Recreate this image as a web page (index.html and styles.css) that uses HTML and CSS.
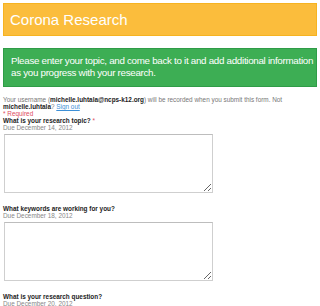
FILE: index.html
```html
<!DOCTYPE html>
<html lang="en">
<head>
    <meta charset="UTF-8">
    <meta name="viewport" content="width=device-width, initial-scale=1.0">
    <title>Corona Research</title>
    <link rel="stylesheet" href="styles.css">
</head>
<body>
    <div class="form-container">
        <div class="title-bar">
            <h1>Corona Research</h1>
        </div>

        <div class="description">
            Please enter your topic, and come back to it and add additional information as you progress with your research.
        </div>

        <div class="user-note">
            Your username (<b>michelle.luhtala@ncps-k12.org</b>) will be recorded when you submit this form. Not <b>michelle.luhtala</b>? <a href="#">Sign out</a>
        </div>
        <div class="required-note">* Required</div>

        <div class="question">
            <label class="q-title" for="topic">What is your research topic? <span class="req">*</span></label>
            <div class="q-help">Due December 14, 2012</div>
            <textarea id="topic"></textarea>
        </div>

        <div class="question">
            <label class="q-title" for="keywords">What keywords are working for you?</label>
            <div class="q-help">Due December 18, 2012</div>
            <textarea id="keywords"></textarea>
        </div>

        <div class="question">
            <label class="q-title" for="rq">What is your research question?</label>
            <div class="q-help">Due December 20, 2012</div>
            <textarea id="rq"></textarea>
        </div>
    </div>
</body>
</html>
```

FILE: styles.css
```css
body {
    font-family: "Liberation Sans", Arial, sans-serif;
    margin: 0;
    padding: 3px;
    background-color: #fff;
    color: #222;
}

.title-bar {
    background-color: #fbbd3c;
    border: 1px solid #f6b321;
    padding: 7px 6px;
}

.title-bar h1 {
    margin: 0;
    font-size: 15px;
    line-height: 17px;
    font-weight: normal;
    color: #fff;
}

.description {
    margin-top: 12px;
    background-color: #3dae54;
    border: 1px solid #2f9c47;
    padding: 6px 1px 7px 7px;
    font-size: 9.8px;
    letter-spacing: -0.3px;
    line-height: 12px;
    color: #fff;
}

.user-note {
    margin-top: 9px;
    font-size: 6.4px;
    line-height: 7px;
    color: #777;
}

.user-note b {
    color: #222;
}

.user-note a {
    color: #3d8fd6;
}

.required-note {
    font-size: 6.4px;
    line-height: 7px;
    color: #dd4b5e;
}

.question {
    margin-bottom: 12px;
}

.q-title {
    display: block;
    font-size: 6.4px;
    line-height: 7px;
    font-weight: bold;
    color: #222;
}

.q-title .req {
    color: #dd4b5e;
    font-weight: normal;
}

.q-help {
    font-size: 6.4px;
    line-height: 7px;
    color: #888;
    margin-bottom: 3px;
}

.question textarea {
    display: block;
    width: 209px;
    height: 59px;
    margin-left: 1px;
    box-sizing: border-box;
    border: 1px solid #cfcfcf;
    border-top-color: #bdbdbd;
    padding: 2px;
    font-family: inherit;
    font-size: 8px;
}
```
